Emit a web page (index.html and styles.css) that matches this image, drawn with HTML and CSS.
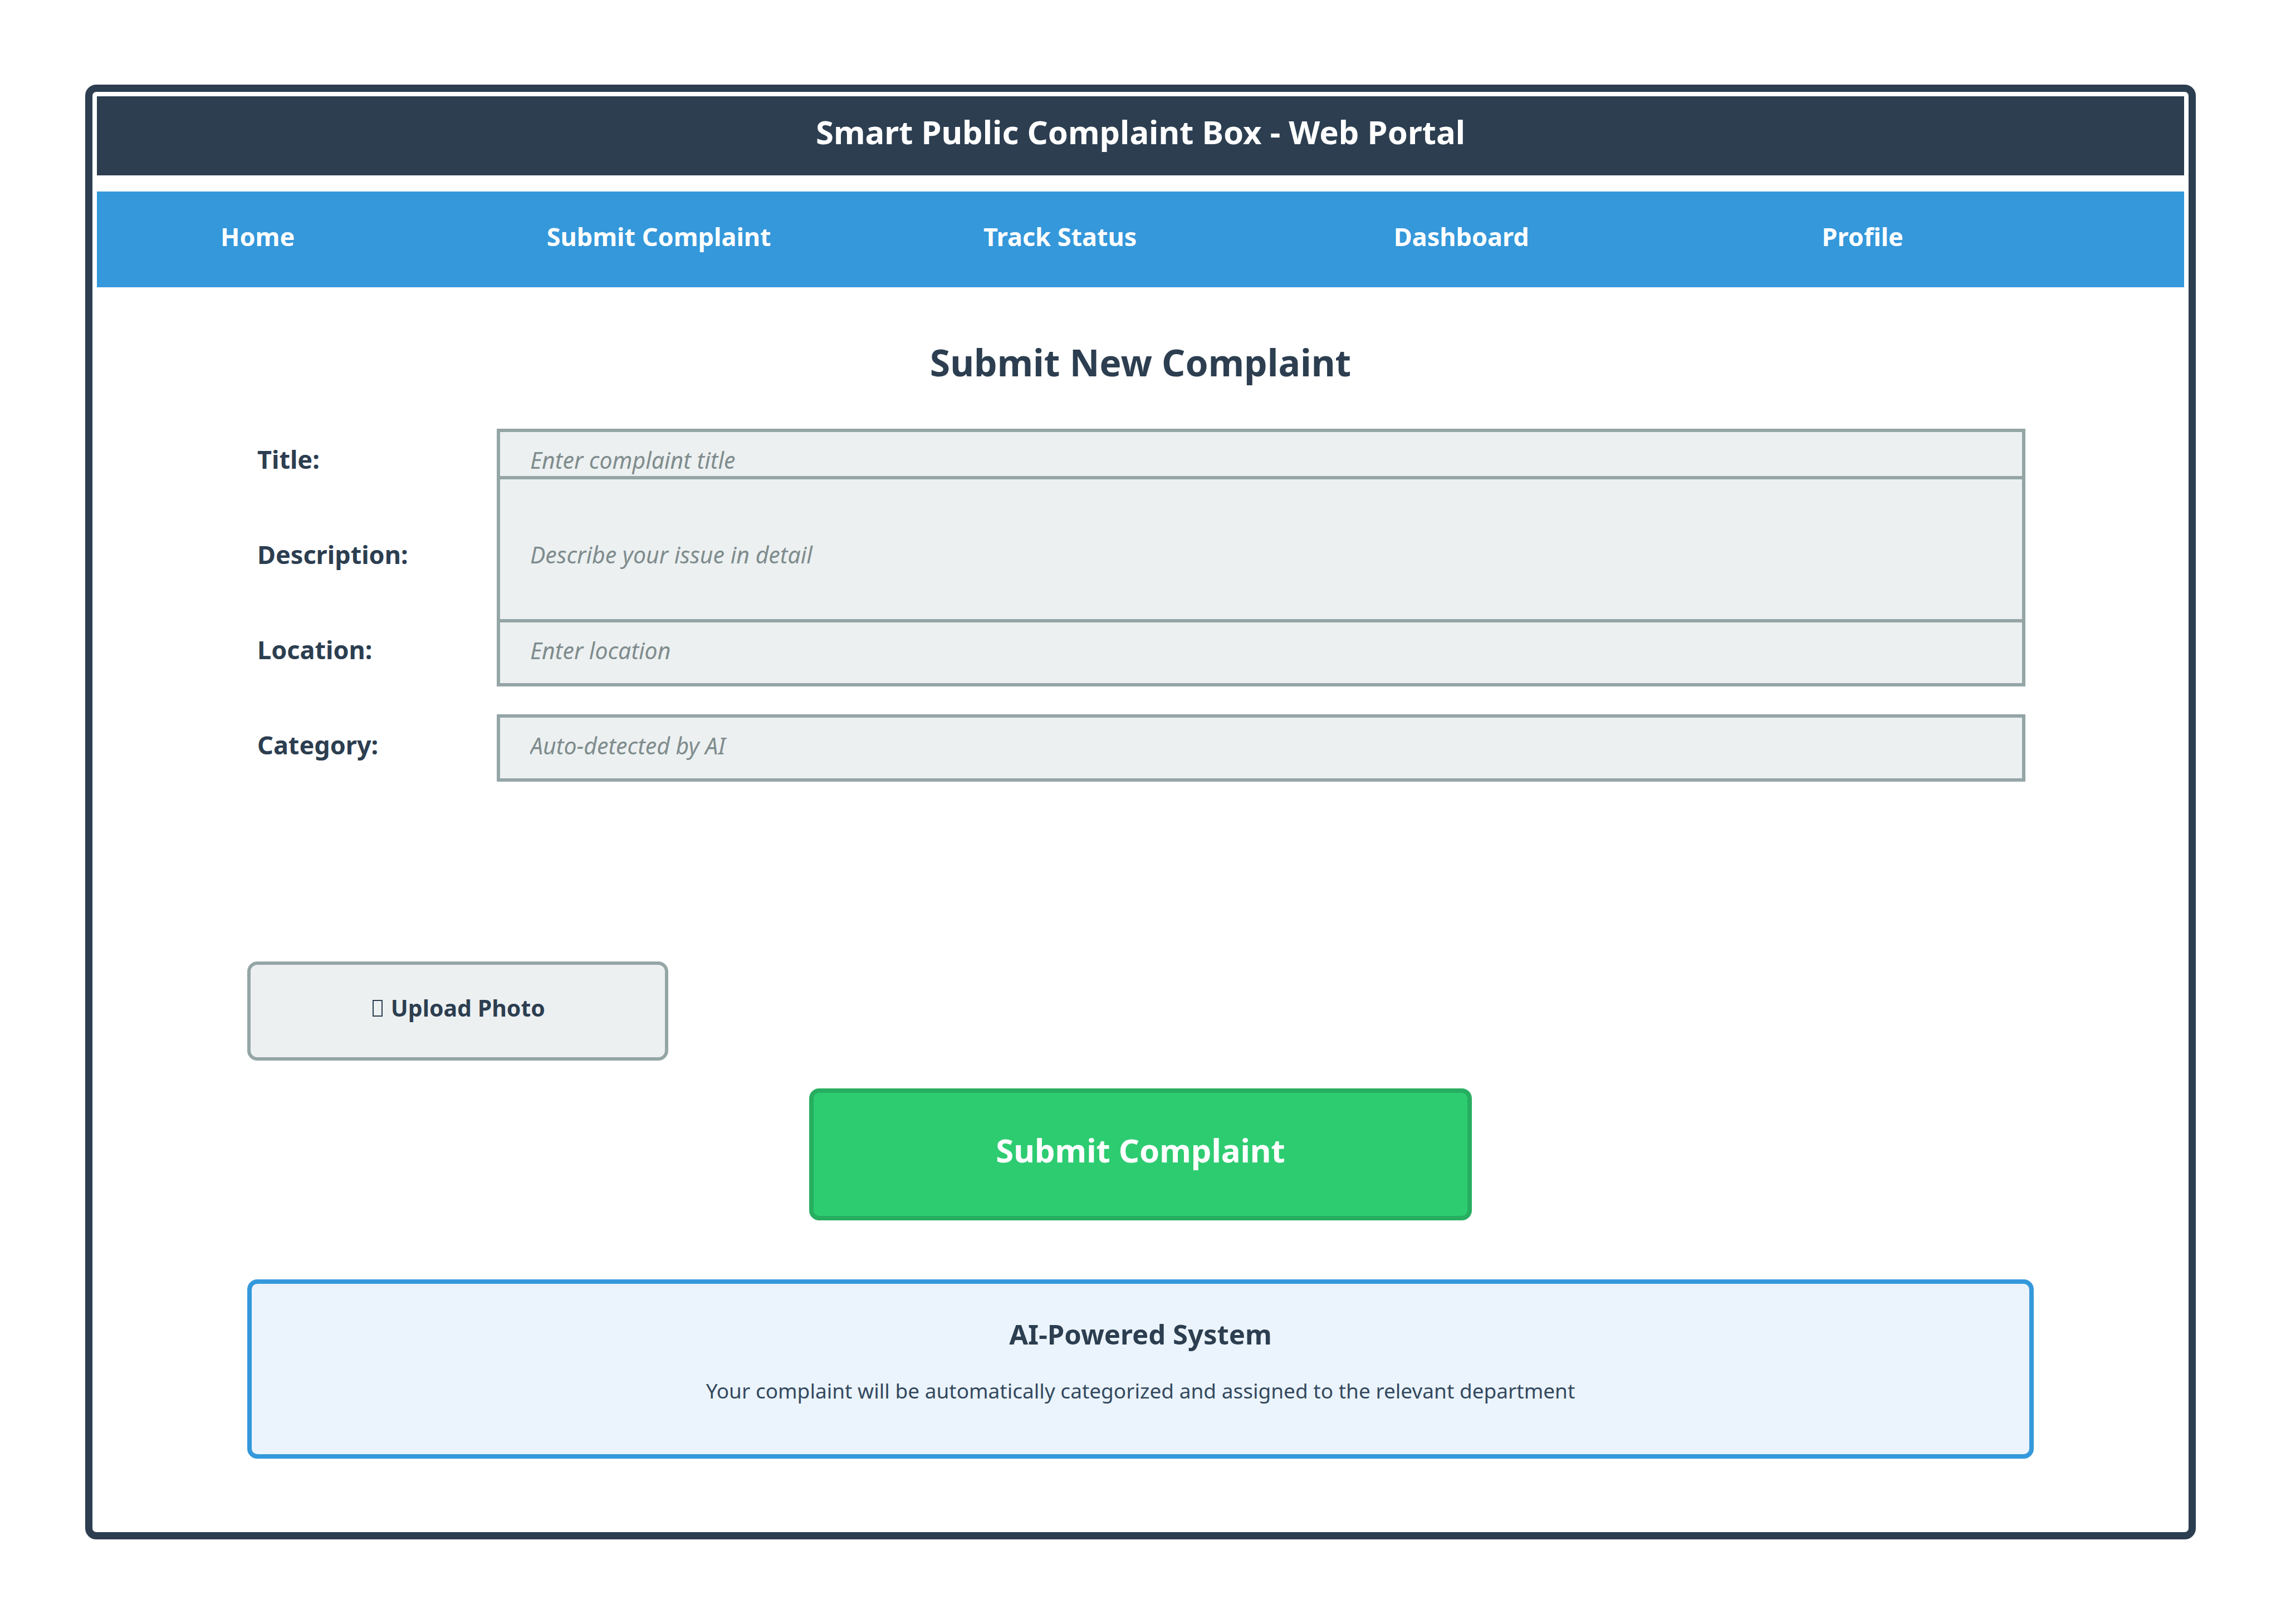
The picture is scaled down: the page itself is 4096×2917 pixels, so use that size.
FILE: index.html
```html
<!DOCTYPE html>
<html lang="en">
<head>
  <meta charset="utf-8">
  <meta name="viewport" content="width=device-width, initial-scale=1">
  <title>Smart Public Complaint Box - Web Portal</title>
  <link rel="stylesheet" href="styles.css">
</head>
<body>
  <div class="portal">
    <header class="banner">
      <h1 class="banner-title">Smart Public Complaint Box - Web Portal</h1>
    </header>
    <nav class="nav">
      <ul class="nav-list">
        <li class="nav-item"><a class="nav-link" href="#home">Home</a></li>
        <li class="nav-item"><a class="nav-link" href="#submit">Submit Complaint</a></li>
        <li class="nav-item"><a class="nav-link" href="#track">Track Status</a></li>
        <li class="nav-item"><a class="nav-link" href="#dashboard">Dashboard</a></li>
        <li class="nav-item"><a class="nav-link" href="#profile">Profile</a></li>
      </ul>
    </nav>
    <main class="content">
      <h2 class="heading">Submit New Complaint</h2>
      <form class="form">
        <div class="fields">
          <label class="label" for="title">Title:</label>
          <input class="field" id="title" type="text" placeholder="Enter complaint title">
          <label class="label" for="description">Description:</label>
          <textarea class="field field-tall" id="description" placeholder="Describe your issue in detail"></textarea>
          <label class="label" for="location">Location:</label>
          <input class="field" id="location" type="text" placeholder="Enter location">
          <label class="label" for="category">Category:</label>
          <input class="field" id="category" type="text" placeholder="Auto-detected by AI">
        </div>
        <button class="upload" type="button"><svg class="upload-icon" viewBox="0 0 18 30" aria-hidden="true"><rect x="1" y="1" width="16" height="28" fill="none" stroke="currentColor" stroke-width="2"/></svg> Upload Photo</button>
        <button class="submit" type="submit">Submit Complaint</button>
      </form>
      <section class="info">
        <h3 class="info-title">AI-Powered System</h3>
        <p class="info-text">Your complaint will be automatically categorized and assigned to the relevant department</p>
      </section>
    </main>
  </div>
</body>
</html>
```
FILE: styles.css
```css
:root {
  --ink: #2c3e50;
  --blue: #3498db;
  --grey: #95a5a6;
  --field: #ecf0f1;
}

* {
  box-sizing: border-box;
  margin: 0;
  padding: 0;
}

body {
  min-height: 100vh;
  padding: 152px 153px;
  display: flex;
  background: #fff;
  color: var(--ink);
  font-family: "Noto Sans", sans-serif;
}

button,
input,
textarea {
  font-family: inherit;
  color: inherit;
}

.portal {
  flex: 1;
  padding: 8px;
  border: 13px solid var(--ink);
  border-radius: 20px;
}

.banner {
  padding: 25px 0 39px;
  background: var(--ink);
  color: #fff;
  text-align: center;
}

.banner-title {
  font-size: 58px;
  line-height: 78px;
}

.nav {
  margin-top: 29px;
  padding: 50px 15.4% 60px 7.7%;
  background: var(--blue);
}

.nav-list {
  display: flex;
  justify-content: space-between;
  list-style: none;
}

/* Zero-width items keep the labels centred on evenly spaced stops. */
.nav-item {
  width: 0;
  display: flex;
  justify-content: center;
}

.nav-link {
  color: #fff;
  font-size: 45px;
  font-weight: 700;
  line-height: 62px;
  text-decoration: none;
  white-space: nowrap;
}

.content {
  padding: 89px 270px 0;
}

.heading {
  font-size: 66px;
  line-height: 90px;
  text-align: center;
}

.form {
  display: flex;
  flex-direction: column;
}

.fields {
  display: grid;
  grid-template-columns: 430px 1fr;
  grid-auto-rows: 121px;
  row-gap: 50px;
  margin-top: 75px;
  padding: 0 15px 0 18px;
}

.label {
  align-self: center;
  padding-bottom: 12px;
  font-size: 45px;
  font-weight: 700;
  line-height: 62px;
}

.field {
  width: 100%;
  height: 100%;
  padding: 0 54px 10px;
  border: 6px solid var(--grey);
  border-radius: 0;
  background: var(--field);
  font-size: 41px;
  font-style: italic;
  line-height: 56px;
  outline: none;
}

.field::placeholder {
  color: #7f8c8d;
  opacity: 1;
}

/* The description box reaches over the rows above and below it. */
.field-tall {
  height: 293px;
  margin: -86px 0;
  padding-top: 107px;
  resize: none;
}

.upload,
.submit {
  border-style: solid;
  border-radius: 18px;
  font-weight: 700;
}

.upload {
  width: 756px;
  margin-top: 323px;
  padding: 49px 0 61px;
  border-width: 6px;
  border-color: var(--grey);
  background: var(--field);
  font-size: 41px;
  line-height: 56px;
}

.upload-icon {
  width: 18px;
  height: 30px;
  margin: 0 4px;
  vertical-align: baseline;
}

.submit {
  align-self: center;
  width: 1190px;
  margin-top: 50px;
  padding: 64px 0 79px;
  border-width: 8px;
  border-color: #27ae60;
  background: #2ecc71;
  color: #fff;
  font-size: 58px;
  line-height: 78px;
}

.info {
  margin-top: 106px;
  padding: 56px 0 88px;
  border: 8px solid var(--blue);
  border-radius: 18px;
  background: #ebf4fc;
  text-align: center;
}

.info-title {
  font-size: 49px;
  line-height: 68px;
}

.info-text {
  margin-top: 42px;
  color: #34495e;
  font-size: 37px;
  line-height: 52px;
}
```
